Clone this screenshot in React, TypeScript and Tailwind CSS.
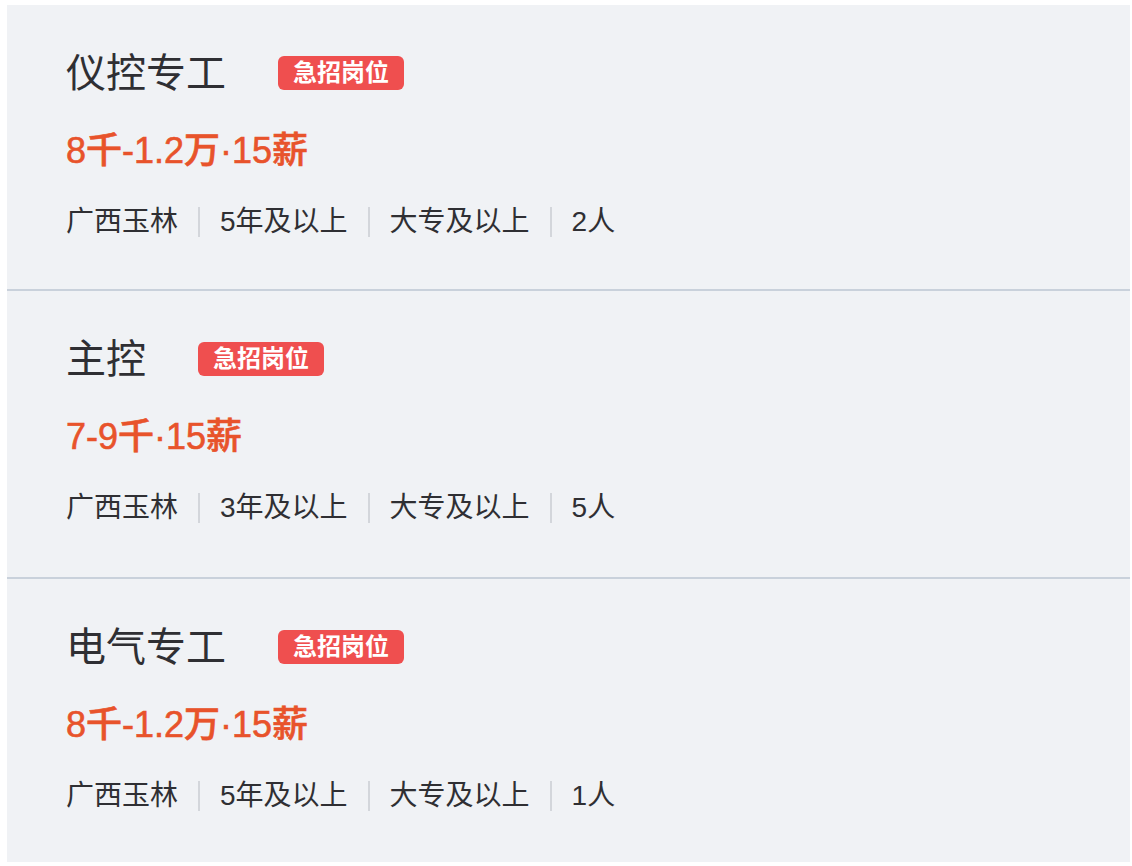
const jobs = [
  { title: '仪控专工', salary: '8千-1.2万·15薪', meta: ['广西玉林', '5年及以上', '大专及以上', '2人'] },
  { title: '主控', salary: '7-9千·15薪', meta: ['广西玉林', '3年及以上', '大专及以上', '5人'] },
  { title: '电气专工', salary: '8千-1.2万·15薪', meta: ['广西玉林', '5年及以上', '大专及以上', '1人'] },
]

const heights = ['h-[286px] border-b-2 border-[#c9d1db]', 'h-[288px] border-b-2 border-[#c9d1db]', 'h-[283px]']

function JobItem({ title, salary, meta, cls }: { title: string; salary: string; meta: string[]; cls: string }) {
  return (
    <div className={`pl-[59px] pt-[44px] ${cls}`}>
      <div className="flex items-center h-[48px]">
        <span className="text-[40px] leading-[48px] text-[#2f2f33]">{title}</span>
        <span className="ml-[52px] h-[34px] px-[15px] rounded-[6px] bg-[#ef4f4f] text-white text-[24px] font-bold leading-[34px]">
          急招岗位
        </span>
      </div>
      <div className="mt-[34px] h-[40px] text-[36px] leading-[40px] font-medium text-[#e8532b] [-webkit-text-stroke:0.6px_#e8532b]">
        {salary}
      </div>
      <div className="mt-[35px] flex items-center h-[32px] text-[28px] leading-[32px] text-[#2f2f33]">
        {meta.map((m, i) => (
          <div key={m + i} className="flex items-center">
            {i > 0 && <span className="mx-[20px] w-[2px] h-[30px] bg-[#d3d6db]" />}
            <span>{m}</span>
          </div>
        ))}
      </div>
    </div>
  )
}

export default function App() {
  return (
    <div
      className="w-[1132px] h-[866px] bg-white pt-[5px] pl-[7px] pr-[2px]"
      style={{ fontFamily: '"Liberation Sans", "Noto Sans CJK SC", sans-serif' }}
    >
      <div className="bg-[#f0f2f5] h-[857px]">
        {jobs.map((j, i) => (
          <JobItem key={j.title} {...j} cls={heights[i]} />
        ))}
      </div>
    </div>
  )
}
